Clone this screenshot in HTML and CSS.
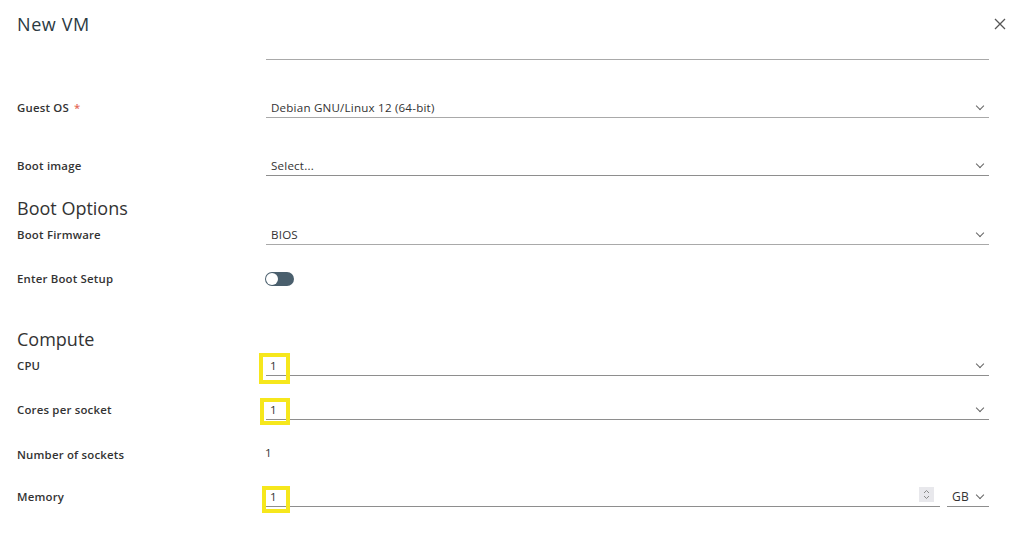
FILE: index.html
```html
<!DOCTYPE html>
<html>
<head>
<meta charset="utf-8">
<link rel="stylesheet" href="styles.css">
</head>
<body>
<div class="dialog">
  <header class="head">
    <h1 class="title">New VM</h1>
    <button class="close" aria-label="Close">
      <svg width="12" height="12" viewBox="0 0 12 12"><path d="M1 1L11 11M11 1L1 11" stroke="#565656" stroke-width="1.3" fill="none"/></svg>
    </button>
  </header>
  <div class="body">
    <div class="row partial"><span class="label"></span><div class="field light"></div></div>

    <div class="row gap-l">
      <span class="label">Guest OS <span class="req">*</span></span>
      <div class="field light"><span class="val">Debian GNU/Linux 12 (64-bit)</span><span class="chev"></span></div>
    </div>

    <div class="row gap-l">
      <span class="label">Boot image</span>
      <div class="field"><span class="val">Select...</span><span class="chev"></span></div>
    </div>

    <h2 class="section s-boot">Boot Options</h2>
    <div class="row gap-xs">
      <span class="label">Boot Firmware</span>
      <div class="field light"><span class="val">BIOS</span><span class="chev"></span></div>
    </div>

    <div class="row gap-m">
      <span class="label">Enter Boot Setup</span>
      <div class="ctl"><span class="toggle"><span class="knob"></span></span></div>
    </div>

    <h2 class="section s-compute">Compute</h2>
    <div class="row gap-xs">
      <span class="label">CPU</span>
      <div class="field"><span class="val num hl hl-big">1</span><span class="chev"></span></div>
    </div>

    <div class="row gap-m">
      <span class="label">Cores per socket</span>
      <div class="field"><span class="val num hl">1</span><span class="chev"></span></div>
    </div>

    <div class="row gap-m1">
      <span class="label">Number of sockets</span>
      <div class="ctl"><span class="static">1</span></div>
    </div>

    <div class="row gap-s">
      <span class="label">Memory</span>
      <div class="mem">
        <div class="field grow"><span class="val num hl hl-mem">1</span><span class="spin"><svg width="7" height="11" viewBox="0 0 7 11"><path d="M1 4L3.5 1.5L6 4M1 7L3.5 9.5L6 7" stroke="#8a8a8a" stroke-width="1" fill="none"/></svg></span></div>
        <div class="field unit"><span class="val">GB</span><span class="chev"></span></div>
      </div>
    </div>
  </div>
</div>
</body>
</html>
```

FILE: styles.css
```css
*, *::before, *::after { box-sizing: border-box; }
html, body { margin: 0; padding: 0; background: #fff; }
body {
  width: 1024px;
  height: 538px;
  overflow: hidden;
  font-family: "Open Sans", "Liberation Sans", sans-serif;
  color: #333;
}
.dialog { display: flex; flex-direction: column; }
.head {
  height: 48px;
  display: flex;
  align-items: center;
  justify-content: space-between;
  padding: 0 18px 0 17px;
}
.title {
  margin: 0;
  font-size: 18px;
  font-weight: 500;
  color: #2b3a42;
  letter-spacing: 0.6px;
}
.close {
  border: 0;
  background: none;
  padding: 0;
  width: 12px;
  height: 12px;
  display: flex;
}
.body { display: flex; flex-direction: column; }
.row {
  display: grid;
  grid-template-columns: 249px 1fr;
  padding: 0 35px 0 17px;
  height: 21px;
  align-items: center;
}
.partial { height: 12px; align-items: stretch; }
.partial .field { height: 12px; border-bottom-color: #bdbdbd; }
.gap-l { margin-top: 37px; }
.gap-xs { margin-top: 4px; }
.gap-m { margin-top: 23px; }
.gap-m1 { margin-top: 24px; }
.gap-s { margin-top: 21px; }
.label {
  font-size: 11.4px;
  font-weight: 600;
  color: #333;
  letter-spacing: 0.2px;
}
.req { color: #e46a58; font-weight: 600; margin-left: 2px; }
.field {
  height: 21px;
  border-bottom: 1px solid #8e8e8e;
  display: flex;
  align-items: center;
  padding: 0 5px 0 5px;
  font-size: 11.6px;
  letter-spacing: 0.2px;
  color: #333;
}
.field.light { border-bottom-color: #a9a9a9; }
.val { position: relative; }
.num { margin-left: -1px; }
.chev {
  margin-left: auto;
  width: 6px;
  height: 6px;
  border-right: 1.2px solid #666;
  border-bottom: 1.2px solid #666;
  transform: rotate(45deg);
  margin-top: -2px;
  margin-right: 1px;
}
.hl::after {
  content: "";
  position: absolute;
  left: -10px;
  top: -4px;
  width: 30px;
  height: 27px;
  border: 4px solid #f6e71c;
}
.hl-big::after { top: -5px; height: 31px; left: -11px; width: 31px; }
.hl-mem::after { left: -8px; width: 28px; top: -3px; }
.section {
  margin: 0;
  padding-left: 17px;
  height: 24px;
  line-height: 24px;
  font-size: 18px;
  font-weight: 400;
  color: #333;
}
.s-boot { margin-top: 20px; }
.s-compute { margin-top: 38px; }
.ctl { display: flex; align-items: center; height: 21px; }
.toggle {
  width: 29px;
  height: 14px;
  border-radius: 7px;
  background: #4a5f6d;
  position: relative;
  display: block;
  margin-left: -1px;
}
.knob {
  position: absolute;
  left: 1px;
  top: 1px;
  width: 12px;
  height: 12px;
  border-radius: 50%;
  background: #fff;
}
.static { font-size: 11.6px; color: #333; margin-top: -4px; margin-left: -1px; }
.mem { display: flex; gap: 7px; }
.grow { flex: 1; padding-right: 6px; }
.spin {
  margin-left: auto;
  width: 15px;
  height: 15px;
  background: #e8e8ec;
  display: flex;
  align-items: center;
  justify-content: center;
  margin-top: -4px;
}
.unit { width: 42px; padding-left: 5px; font-size: 12px; }
```
